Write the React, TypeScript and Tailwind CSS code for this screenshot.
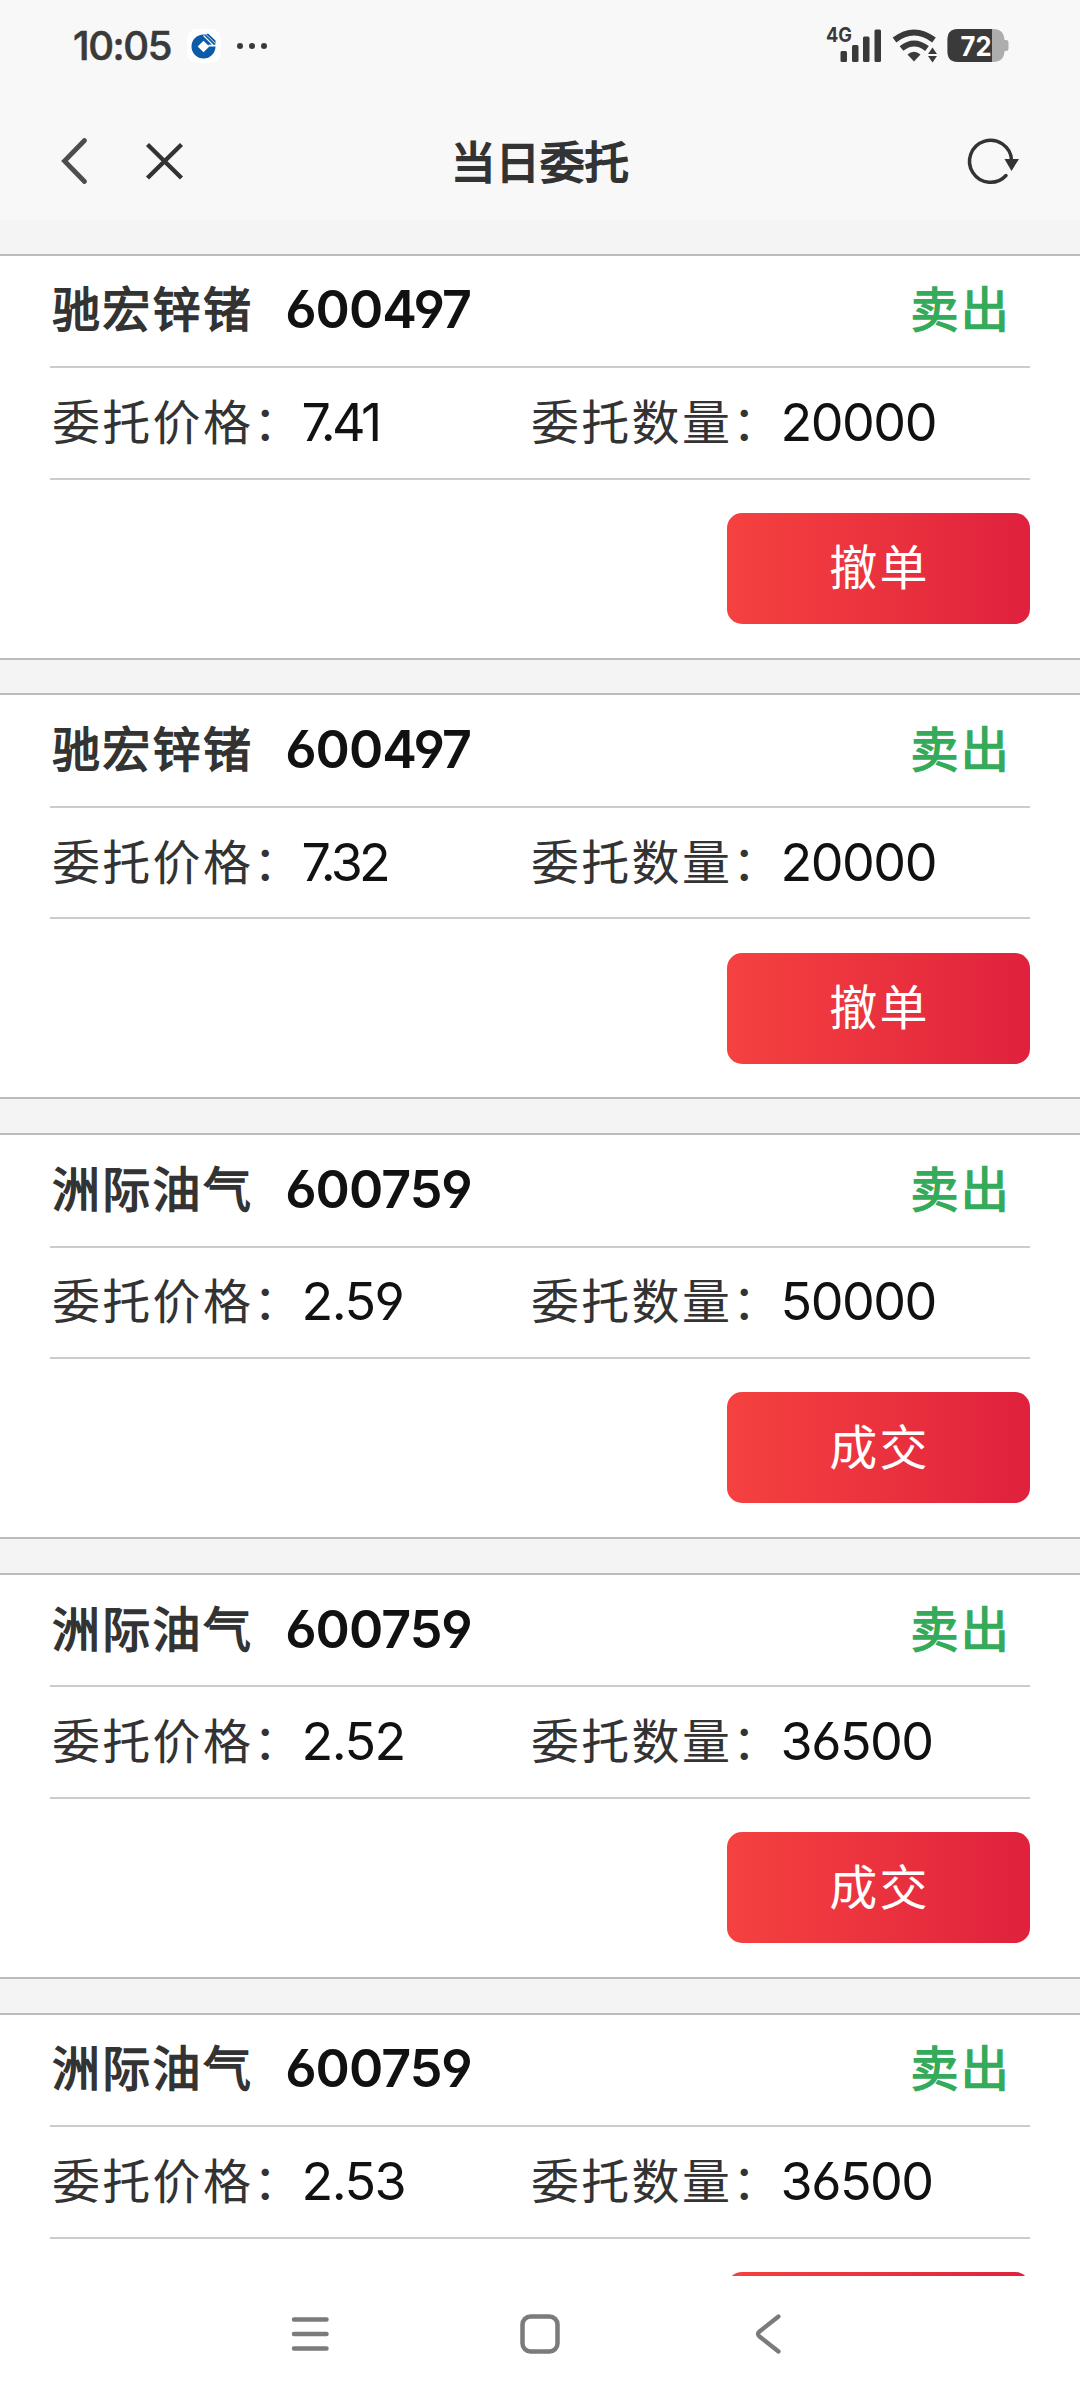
const orders = [
    { name: '驰宏锌锗', code: '600497', price: '7.41', amount: '20000', action: '撤单' },
    { name: '驰宏锌锗', code: '600497', price: '7.32', amount: '20000', action: '撤单' },
    { name: '洲际油气', code: '600759', price: '2.59', amount: '50000', action: '成交' },
    { name: '洲际油气', code: '600759', price: '2.52', amount: '36500', action: '成交' },
    { name: '洲际油气', code: '600759', price: '2.53', amount: '36500', action: '' },
];

function StatusBar() {
    return (
        <div className="flex h-[92px] items-center justify-between pl-[73px] pr-[71px] text-[#3a3a3a]">
            <div className="flex items-center">
                <span className="w-[114px] text-[40px] leading-none font-medium tracking-[-1.4px] [-webkit-text-stroke:0.6px_#3a3a3a]">10:05</span>
                <div className="flex size-[34px] items-center justify-center rounded-[10px] bg-white">
                    <svg className="size-[26px]" viewBox="0 0 26 26">
                        <circle cx="12.5" cy="13.5" r="12" fill="#0a5ba8" />
                        <path d="M14 2 L17 0.500 L24.500 7.500 V11 L20 12 Z" fill="#0a5ba8" />
                        <path d="M12.500 7.700 L18.300 13.500 L12.500 19.300 L6.700 13.500 Z" fill="#fff" />
                        <path d="M17.500 12.600 H26" stroke="#fff" strokeWidth="1.800" />
                        <path d="M12.500 2.500 L22 12" stroke="#fff" strokeWidth="1.100" />
                        <path d="M15 1.500 L24.500 10.500" stroke="#fff" strokeWidth="0.800" />
                    </svg>
                </div>
                <div className="ml-[16px] flex gap-[6px]">
                    <span className="size-[6px] rounded-full bg-[#3a3a3a]"></span>
                    <span className="size-[6px] rounded-full bg-[#3a3a3a]"></span>
                    <span className="size-[6px] rounded-full bg-[#3a3a3a]"></span>
                </div>
            </div>
            <div className="flex items-center">
                <svg className="h-[60px] w-[56px]" viewBox="0 -10 56 60" fill="#3a3a3a">
                    <text x="0" y="16" fontSize="20" fontWeight="700" textLength="26" lengthAdjust="spacingAndGlyphs">4G</text>
                    <rect x="14.500" y="25" width="6.500" height="11" rx="1.500" />
                    <rect x="26" y="19" width="6.500" height="17" rx="1.500" />
                    <rect x="37" y="10.500" width="6.500" height="25.500" rx="1.500" />
                    <rect x="48.500" y="3.500" width="6.500" height="32.500" rx="1.500" />
                </svg>
                <svg className="ml-[10px] h-[40px] w-[46px]" viewBox="0 0 46 40" fill="none" stroke="#3a3a3a">
                    <path d="M2.500 14 Q22 -1 42 14" strokeWidth="6" />
                    <path d="M9.500 22.500 Q22 12.500 35 22.500" strokeWidth="6" />
                    <path d="M22 35.500 L15.500 28.500 Q22 23 28.500 28.500 Z" fill="#3a3a3a" stroke="none" />
                    <path d="M40.500 21.500 L45 28 H36 Z M36 30 H45 L40.500 36.500 Z" fill="#3a3a3a" stroke="none" />
                </svg>
                <svg className="ml-[9px] h-[40px] w-[62px]" viewBox="0 0 62 40">
                    <path d="M11 3 H46 Q57 3 57.500 14 H59 Q61.500 14 61.500 17 V22 Q61.500 25 59 25 H57.500 Q57 36 46 36 H11 Q0.500 36 0.500 25.500 V13.500 Q0.500 3 11 3 Z" fill="#adadad" />
                    <path d="M11 3 H45 V36 H11 Q0.500 36 0.500 25.500 V13.500 Q0.500 3 11 3 Z" fill="#3a3a3a" />
                    <text x="13.500" y="29.500" fontSize="27" fontWeight="700" fill="#fff" textLength="31" lengthAdjust="spacingAndGlyphs">72</text>
                </svg>
            </div>
        </div>
    );
}

function Header() {
    return (
        <div className="grid h-[128px] grid-cols-3 items-center px-[56px] pt-[22px] pb-[12px]">
            <svg className="h-[50px] w-[130px]" viewBox="0 0 130 50" fill="none">
                <path d="M28.500 4.500 L8.500 25 L28.500 45.500" stroke="#4d4d4d" strokeWidth="4.800" strokeLinecap="round" />
                <path d="M91.500 8.500 L125.500 42 M125.500 8.500 L91.500 42" stroke="#333" strokeWidth="4.400" />
            </svg>
            <div className="pt-[4px] text-center text-[44.5px] leading-none text-[#333] [-webkit-text-stroke:1.8px_#333]">
                当日委托
            </div>
            <svg className="h-[50px] w-[60px] justify-self-end" viewBox="0 0 60 50" fill="none">
                <path d="M47.500 24 A21 21 0 1 0 42 39.500" stroke="#333" strokeWidth="3.500" strokeLinecap="round" />
                <path d="M40.500 23 H55 L47.500 35 Z" fill="#333" />
            </svg>
        </div>
    );
}

function Field({ label, value }: { label: string; value: string }) {
    return (
        <div className="flex items-center">
            <span className="text-[48px] tracking-[2.3px] text-[#333]">{label}：</span>
            <span className={`-ml-[2px] text-[52px] text-[#111] ${value.startsWith('7.') ? 'tracking-[-3.7px]' : 'tracking-[-1.5px]'}`}>
                {value}
            </span>
        </div>
    );
}

function OrderCard({ order }: { order: (typeof orders)[number] }) {
    return (
        <div className="mb-[33.85px] h-[405.9px] shrink-0 border-y-2 border-[#bbb] bg-white px-[50px] leading-none">
            <div className="flex h-[112.6px] items-center border-b-2 border-[#ccc] pb-[1px] pl-[2px]">
                <span className="text-[48px] tracking-[2.3px] text-[#333] [-webkit-text-stroke:1.5px_#333]">{order.name}</span>
                <span className="ml-[32px] text-[52px] font-semibold tracking-[-1px] text-[#111]">{order.code}</span>
                <span className="mr-[19px] ml-auto text-[48px] tracking-[2.3px] text-[#34aa5b] [-webkit-text-stroke:1.5px_#34aa5b]">卖出</span>
            </div>
            <div className="grid h-[111.4px] grid-cols-[479px_1fr] items-center border-b-2 border-[#ccc] pl-[2px]">
                <Field label="委托价格" value={order.price} />
                <Field label="委托数量" value={order.amount} />
            </div>
            <button className="mt-[33.3px] ml-auto flex h-[111px] w-[303px] items-center justify-center rounded-[15px] bg-linear-to-r from-[#f5413f] to-[#e0203d] pl-[2px] text-[48px] tracking-[2.3px] text-white">
                {order.action}
            </button>
        </div>
    );
}

function NavBar() {
    return (
        <div className="flex h-[124px] items-center justify-between bg-white px-[290px] pb-[8px]">
            <svg className="size-[42px]" viewBox="0 0 42 42" fill="none" stroke="#7b7b7b" strokeWidth="4.500" strokeLinecap="round">
                <path d="M4 6.500 H36.500 M4 21 H36.500 M4 35.500 H36.500" />
            </svg>
            <svg className="size-[42px]" viewBox="0 0 42 42" fill="none" stroke="#7b7b7b" strokeWidth="4.500">
                <rect x="3.500" y="3.500" width="35" height="35" rx="8" />
            </svg>
            <svg className="size-[42px]" viewBox="0 0 42 42" fill="none" stroke="#7b7b7b" strokeWidth="4.300" strokeLinecap="round">
                <path d="M30.500 3.500 L11.500 18.500 Q8.500 21 11.500 23.500 L30.500 38.500" />
            </svg>
        </div>
    );
}

export default function App() {
    return (
        <div className="flex h-[2400px] w-[1080px] flex-col overflow-hidden bg-[#f8f8f8] font-[Inter,'Noto_Sans_CJK_SC',sans-serif] [font-feature-settings:'cv03','cv04']">
            <StatusBar />
            <Header />
            <div className="flex flex-1 flex-col overflow-hidden bg-[#f4f4f4] pt-[33.7px]">
                {orders.map((order, i) => (
                    <OrderCard key={i} order={order} />
                ))}
            </div>
            <NavBar />
        </div>
    );
}
